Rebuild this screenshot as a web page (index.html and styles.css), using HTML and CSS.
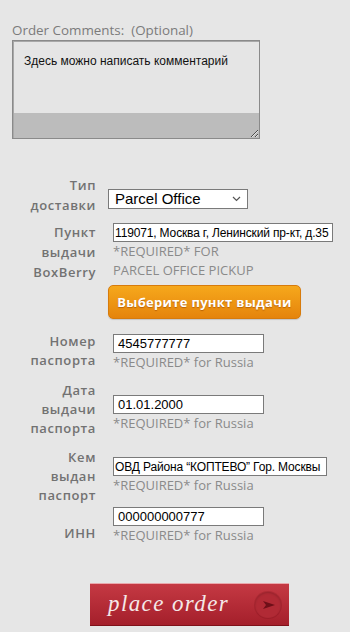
FILE: index.html
```html
<!DOCTYPE html>
<html lang="ru">
  <head>
    <meta charset="UTF-8" />
    <meta name="viewport" content="width=device-width, initial-scale=1.0" />
    <title>Checkout</title>
    <link rel="stylesheet" href="styles.css">
  </head>
  <body>
    <div class="comments">
      <label class="comments-label" for="comments">Order Comments:&nbsp; (Optional)</label>
      <textarea id="comments" class="comments-box">Здесь можно написать комментарий</textarea>
    </div>

    <div class="form">
      <div class="row row-type">
        <div class="label">Тип<br>доставки</div>
        <div class="field">
          <div class="select-wrap">
            <select class="select">
              <option>Parcel Office</option>
            </select>
            <svg class="chevron" width="9" height="6" viewBox="0 0 9 6">
              <path d="M1 1l3.5 3.5L8 1" fill="none" stroke="#555" stroke-width="1.2" />
            </svg>
          </div>
        </div>
      </div>

      <div class="row row-point">
        <div class="label">Пункт<br>выдачи<br>BoxBerry</div>
        <div class="field">
          <input class="input input-address" type="text" value="119071, Москва г, Ленинский пр-кт, д.35">
          <div class="required">*REQUIRED* FOR<br>PARCEL OFFICE PICKUP</div>
          <button class="btn-pick" type="button">Выберите пункт выдачи</button>
        </div>
      </div>

      <div class="row row-passport">
        <div class="label">Номер<br>паспорта</div>
        <div class="field">
          <input class="input input-short" type="text" value="4545777777">
          <div class="required">*REQUIRED* for Russia</div>
        </div>
      </div>

      <div class="row row-date">
        <div class="label">Дата<br>выдачи<br>паспорта</div>
        <div class="field">
          <input class="input input-short" type="text" value="01.01.2000">
          <div class="required">*REQUIRED* for Russia</div>
        </div>
      </div>

      <div class="row row-issued">
        <div class="label">Кем<br>выдан<br>паспорт</div>
        <div class="field">
          <input class="input input-issued" type="text" value="ОВД Района “КОПТЕВО” Гор. Москвы">
          <div class="required">*REQUIRED* for Russia</div>
        </div>
      </div>

      <div class="row row-inn">
        <div class="label">ИНН</div>
        <div class="field">
          <input class="input input-short" type="text" value="000000000777">
          <div class="required">*REQUIRED* for Russia</div>
        </div>
      </div>
    </div>

    <div class="submit">
      <button class="btn-order" type="button">
        <span class="btn-order-text">place order</span>
        <span class="btn-order-icon">
          <svg width="14" height="10" viewBox="0 0 14 10">
            <path d="M1 1l12 4-12 4 3-4z" fill="#6e0f18" />
          </svg>
        </span>
      </button>
    </div>
  </body>
</html>
```

FILE: styles.css
```css
* {
  margin: 0;
  padding: 0;
  box-sizing: border-box;
}

body {
  width: 350px;
  min-height: 632px;
  background: #e6e6e6;
  font-family: "Open Sans", "Liberation Sans", sans-serif;
}

.comments {
  padding: 21px 12px 0;
}

.comments-label {
  display: block;
  font-size: 13.4px;
  line-height: 19px;
  color: #7b7b7b;
}

.comments-box {
  display: block;
  width: 248px;
  height: 99px;
  padding: 13px 11px 0;
  border: 1px solid #8a8a8a;
  box-shadow: inset 1px 1px 0 #a8a8a8;
  background: linear-gradient(#e5e5e5 72px, #bcbcbc 72px);
  font-family: "Liberation Sans", Arial, sans-serif;
  font-size: 12px;
  line-height: 15px;
  color: #111;
  resize: both;
  outline: none;
}

.form {
  padding-top: 36px;
}

.row {
  display: grid;
  grid-template-columns: 96px 1fr;
  column-gap: 12px;
  align-items: start;
}

.label {
  text-align: right;
  font-size: 13px;
  font-weight: 600;
  line-height: 19px;
  letter-spacing: 0.6px;
  color: #727272;
}

.row-type .label,
.row-point .label {
  line-height: 20px;
}

.field {
  display: flex;
  flex-direction: column;
  align-items: flex-start;
}

.row-point {
  margin-top: 7px;
}

.row-point .field {
  padding-top: 1px;
}

.row-type .field {
  padding-top: 14px;
}

.row-passport {
  margin-top: 13px;
}

.row-passport .field {
  padding-top: 2px;
}

.row-date {
  margin-top: 9px;
}

.row-date .field {
  padding-top: 14px;
}

.row-issued {
  margin-top: 10px;
}

.row-issued .field {
  padding-top: 9px;
}

.row-inn {
  margin-top: 2px;
}

.row-inn .label {
  padding-top: 17px;
}

.select-wrap {
  position: relative;
}

.select {
  appearance: none;
  -webkit-appearance: none;
  display: block;
  width: 140px;
  height: 20px;
  padding: 0 20px 0 6px;
  border: 1px solid #7a7a7a;
  border-radius: 0;
  background: #fff;
  font-family: "Liberation Sans", Arial, sans-serif;
  font-size: 15px;
  line-height: 18px;
  color: #000;
}

.chevron {
  position: absolute;
  top: 7px;
  right: 7px;
}

.input {
  display: block;
  height: 19px;
  margin-left: 5px;
  padding: 0 4px;
  border: 1px solid #7a7a7a;
  background: #fff;
  font-family: "Liberation Sans", Arial, sans-serif;
  font-size: 13px;
  color: #000;
  outline: none;
}

.input-address {
  width: 220px;
  padding: 0 1px;
  font-size: 12px;
  letter-spacing: -0.15px;
}

.input-short {
  width: 151px;
}

.input-issued {
  width: 214px;
  padding: 0 1px;
  font-size: 12px;
  letter-spacing: -0.15px;
}

.required {
  padding-left: 5px;
  font-size: 13px;
  line-height: 19px;
  color: #8a8a8a;
}

.btn-pick {
  width: 193px;
  height: 34px;
  margin-top: 5px;
  border: 1px solid #d77b0c;
  border-radius: 5px;
  background: linear-gradient(#f6a81c, #e5840c);
  box-shadow: 0 1px 1px rgba(0, 0, 0, 0.15);
  font-family: "Open Sans", "Liberation Sans", sans-serif;
  font-size: 13px;
  font-weight: 700;
  letter-spacing: 0.3px;
  color: #fff;
  text-shadow: 0 1px 1px rgba(150, 70, 0, 0.6);
  cursor: pointer;
}

.submit {
  padding: 38px 0 0 90px;
}

.btn-order {
  display: flex;
  align-items: center;
  justify-content: space-between;
  width: 199px;
  height: 43px;
  padding: 0 8px 0 18px;
  border: 0;
  border-top: 1px solid #e9a9ad;
  border-bottom: 1px solid #7f1119;
  background: linear-gradient(#c53943, #a41f2b);
  cursor: pointer;
}

.btn-order-text {
  font-family: "Liberation Serif", "Times New Roman", serif;
  font-style: italic;
  font-size: 23px;
  letter-spacing: 1.4px;
  color: #f4e8e8;
  padding-bottom: 2px;
}

.btn-order-icon {
  display: flex;
  align-items: center;
  justify-content: center;
  width: 26px;
  height: 26px;
  border-radius: 50%;
  background: #b12a35;
  box-shadow: 0 0 0 1px rgba(120, 15, 25, 0.25), inset 0 1px 2px rgba(0, 0, 0, 0.15);
  padding-left: 2px;
}
```
